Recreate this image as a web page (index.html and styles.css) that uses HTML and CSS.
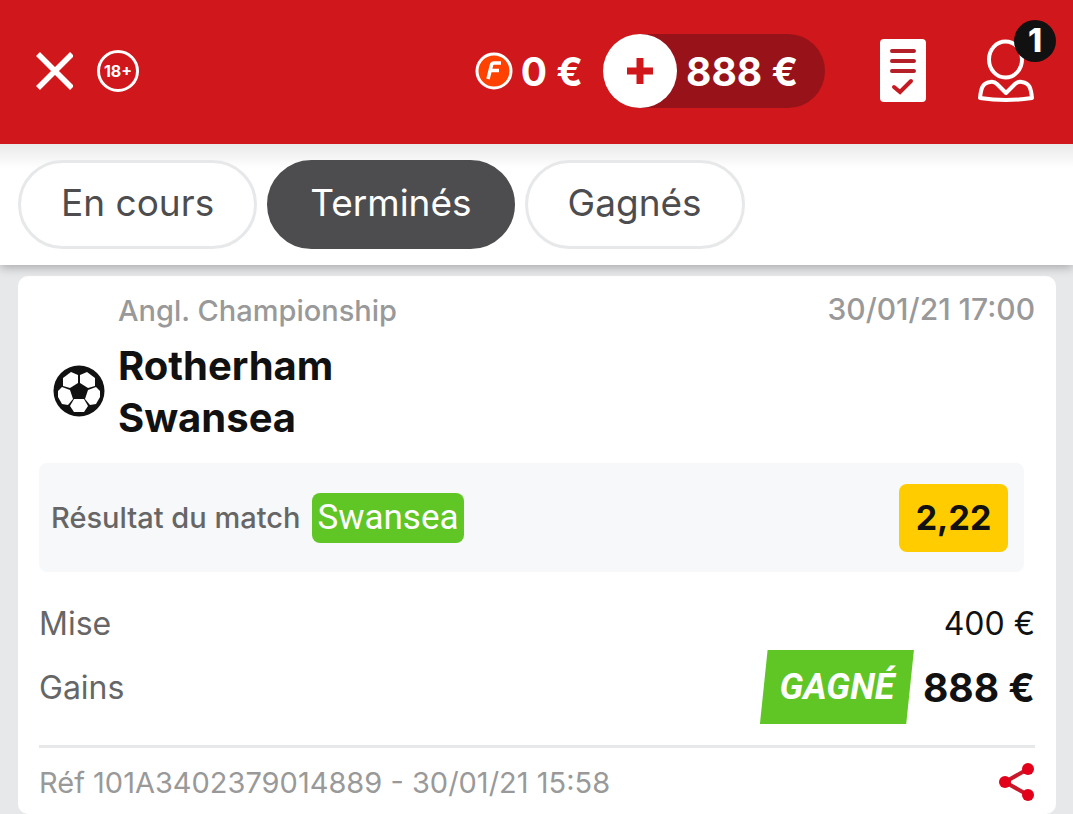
FILE: index.html
```html
<!DOCTYPE html>
<html lang="fr">
  <head>
    <meta charset="UTF-8" />
    <meta name="viewport" content="width=device-width, initial-scale=1.0" />
    <title>Mes paris</title>
    <link rel="stylesheet" href="styles.css">
  </head>
  <body>
    <header class="topbar">
      <button class="icon-btn" aria-label="Fermer">
        <svg width="38" height="38" viewBox="0 0 38 38">
          <path d="M3 2L37 36M37 2L3 36" stroke="#fff" stroke-width="5.500" />
        </svg>
      </button>
      <span class="age">18+</span>

      <div class="freebets">
        <svg width="38" height="38" viewBox="0 0 38 38">
          <circle cx="19" cy="19" r="17" fill="#ff4200" stroke="#fff" stroke-width="3" />
          <path d="M26 11H19Q17 11 16.500 13L13 27M15.500 18.500H24" fill="none" stroke="#fff" stroke-width="3.500" />
        </svg>
        <span>0 €</span>
      </div>

      <div class="balance">
        <button class="plus" aria-label="Ajouter">
          <svg width="28" height="28" viewBox="0 0 28 28">
            <path d="M14 1V27M1 14H27" stroke="#d0171c" stroke-width="7" />
          </svg>
        </button>
        <span>888 €</span>
      </div>

      <button class="icon-btn bets" aria-label="Mes paris">
        <svg width="46" height="64" viewBox="0 0 46 64">
          <rect width="46" height="63" rx="4" fill="#fff" />
          <path d="M12 12H34M12 22H34M12 32H34" stroke="#b51f27" stroke-width="4" stroke-linecap="round" />
          <path d="M14 48L20 53L31 42" fill="none" stroke="#c51a22" stroke-width="4" stroke-linecap="round" />
        </svg>
      </button>

      <button class="icon-btn account" aria-label="Mon compte">
        <svg width="56" height="64" viewBox="0 0 56 64" fill="none" stroke="#fff" stroke-width="4" stroke-linejoin="round">
          <ellipse cx="27.500" cy="20.500" rx="16.500" ry="18" />
          <path d="M2 59C3 50 4 44 12 43Q16 42 19 45L28 54L37 45Q40 42 44 43C52 44 53 50 54 59Q28 63 2 59Z" />
        </svg>
        <span class="badge">1</span>
      </button>
    </header>

    <nav class="tabs">
      <button class="tab">En cours</button>
      <button class="tab selected">Terminés</button>
      <button class="tab">Gagnés</button>
    </nav>

    <main>
      <article class="bet">
        <div class="bet-head">
          <svg class="ball" width="52" height="52" viewBox="0 0 52 52">
            <circle cx="26" cy="26" r="25.500" fill="#111" />
            <g fill="#fff">
              <path d="M25 10V18L17 23L10 21V13L18 7Z" />
              <path d="M27 10V18L35 23L42 21V13L34 7Z" />
              <path d="M9 22L17 25L20 34L15 40L9 39L5 32V26Z" />
              <path d="M43 22L35 25L32 34L37 40L43 39L47 32V26Z" />
              <path d="M21 34H31L35 41L31 47H21L17 41Z" />
            </g>
          </svg>
          <div class="match">
            <p class="league">Angl. Championship</p>
            <h2>Rotherham</h2>
            <h2>Swansea</h2>
          </div>
          <time class="date">30/01/21 17:00</time>
        </div>

        <div class="selection">
          <span class="market">Résultat du match</span>
          <span class="pick">Swansea</span>
          <span class="odds">2,22</span>
        </div>

        <dl class="amounts">
          <div class="row">
            <dt>Mise</dt>
            <dd>400 €</dd>
          </div>
          <div class="row">
            <dt>Gains</dt>
            <dd class="win"><span class="won">GAGNÉ</span>888 €</dd>
          </div>
        </dl>

        <footer class="ref">
          <span>Réf 101A3402379014889 - 30/01/21 15:58</span>
          <button class="icon-btn" aria-label="Partager">
            <svg width="36" height="40" viewBox="0 0 36 40">
              <path d="M29 7L6 20L29 33" fill="none" stroke="#c8182a" stroke-width="4" />
              <g fill="#e2001a">
                <circle cx="29" cy="7" r="6" />
                <circle cx="6" cy="20" r="6" />
                <circle cx="29" cy="33" r="6" />
              </g>
            </svg>
          </button>
        </footer>
      </article>
    </main>
  </body>
</html>
```
FILE: styles.css
```css
* {
  box-sizing: border-box;
}
body {
  margin: 0;
  background-color: #e7e8ea;
  color: #111;
  font-family: Inter, "Open Sans", sans-serif;
}
h2,
p,
dl,
dd {
  margin: 0;
}
button {
  font-family: inherit;
  border: none;
  cursor: pointer;
}
svg {
  display: block;
}
.icon-btn {
  padding: 0;
  background: none;
}

/* header */
.topbar {
  display: flex;
  align-items: center;
  height: 144px;
  padding: 0 39px 2px 35px;
  background-color: #d0171c;
  color: #fff;
  font-size: 39px;
  font-weight: 700;
}
.age {
  width: 42px;
  height: 42px;
  margin-left: 24px;
  border: 3px solid #fff;
  border-radius: 50%;
  font-size: 16px;
  line-height: 36px;
  text-align: center;
}
.freebets {
  display: flex;
  align-items: center;
  gap: 8px;
  margin-left: auto;
}
.balance {
  display: flex;
  align-items: center;
  gap: 9px;
  width: 222px;
  margin-left: 20px;
  border-radius: 37px;
  background-color: #971319;
}
.plus {
  display: grid;
  place-items: center;
  width: 74px;
  height: 74px;
  padding: 0;
  border-radius: 50%;
  background-color: #fff;
}
.bets {
  margin-left: 55px;
}
.account {
  position: relative;
  margin-left: 52px;
}
.badge {
  position: absolute;
  top: -19px;
  right: -22px;
  width: 42px;
  height: 42px;
  border-radius: 50%;
  background-color: #111;
  color: #fff;
  font-size: 32px;
  font-weight: 800;
  line-height: 42px;
  text-align: center;
}

/* tabs */
.tabs {
  position: relative;
  display: flex;
  gap: 10px;
  padding: 16px 18px;
  background: linear-gradient(#e9e9e9, #fff 24px);
  box-shadow: 0 2px 10px rgba(0, 0, 0, 0.3);
  clip-path: inset(0 0 -20px);
}
.tab {
  height: 89px;
  padding: 0 40px 4px;
  border: 3px solid #e7e8ea;
  border-radius: 45px;
  background-color: #fff;
  color: #4d4d4f;
  font-size: 37px;
}
.tab.selected {
  border-color: #4d4d4f;
  background-color: #4d4d4f;
  color: #fff;
}

/* bet card */
main {
  padding: 11px 17px 0 18px;
}
.bet {
  padding: 18px 21px 12px;
  border-radius: 10px;
  background-color: #fff;
}
.bet-head {
  display: flex;
}
.ball {
  margin: 71px 13px 0 14px;
}
.league,
.date {
  color: #999;
  font-size: 29px;
  line-height: 34px;
}
.date {
  font-size: 30px;
  line-height: 31px;
}
.match {
  flex: 1;
}
.match h2 {
  font-size: 40px;
  line-height: 52px;
}
.match .league {
  margin-bottom: 12px;
}
.selection {
  display: flex;
  align-items: center;
  height: 109px;
  margin: 19px 11px 0 0;
  padding: 0 16px 0 12px;
  border-radius: 8px;
  background-color: #f6f8fa;
}
.market {
  color: #666;
  font-size: 29px;
}
.pick {
  margin-left: 12px;
  padding: 0 5px;
  border-radius: 8px;
  background-color: #60c625;
  color: #fff;
  font-family: Roboto, sans-serif;
  font-size: 35px;
  line-height: 50px;
}
.odds {
  width: 109px;
  margin-left: auto;
  border-radius: 8px;
  background-color: #ffcc00;
  font-size: 34px;
  font-weight: 700;
  line-height: 68px;
  text-align: center;
}
.amounts {
  padding: 24px 0 21px;
  font-size: 32px;
}
.row {
  display: flex;
  align-items: center;
  justify-content: space-between;
  min-height: 54px;
}
.row dt {
  color: #666;
}
.win {
  display: flex;
  align-items: center;
  gap: 9px;
  font-size: 39px;
  font-weight: 700;
}
.won {
  width: 154px;
  background-color: #60c625;
  clip-path: polygon(5% 0, 100% 0, 95% 100%, 0 100%);
  color: #fff;
  font-family: "Liberation Sans Narrow", Roboto, sans-serif;
  font-size: 36px;
  font-style: italic;
  line-height: 74px;
  text-align: center;
}
.league,
.date,
.market {
  font-weight: 500;
}
.ref {
  display: flex;
  align-items: center;
  justify-content: space-between;
  padding-top: 14px;
  border-top: 3px solid #e7e8ea;
  color: #999;
  font-size: 29px;
}
```
